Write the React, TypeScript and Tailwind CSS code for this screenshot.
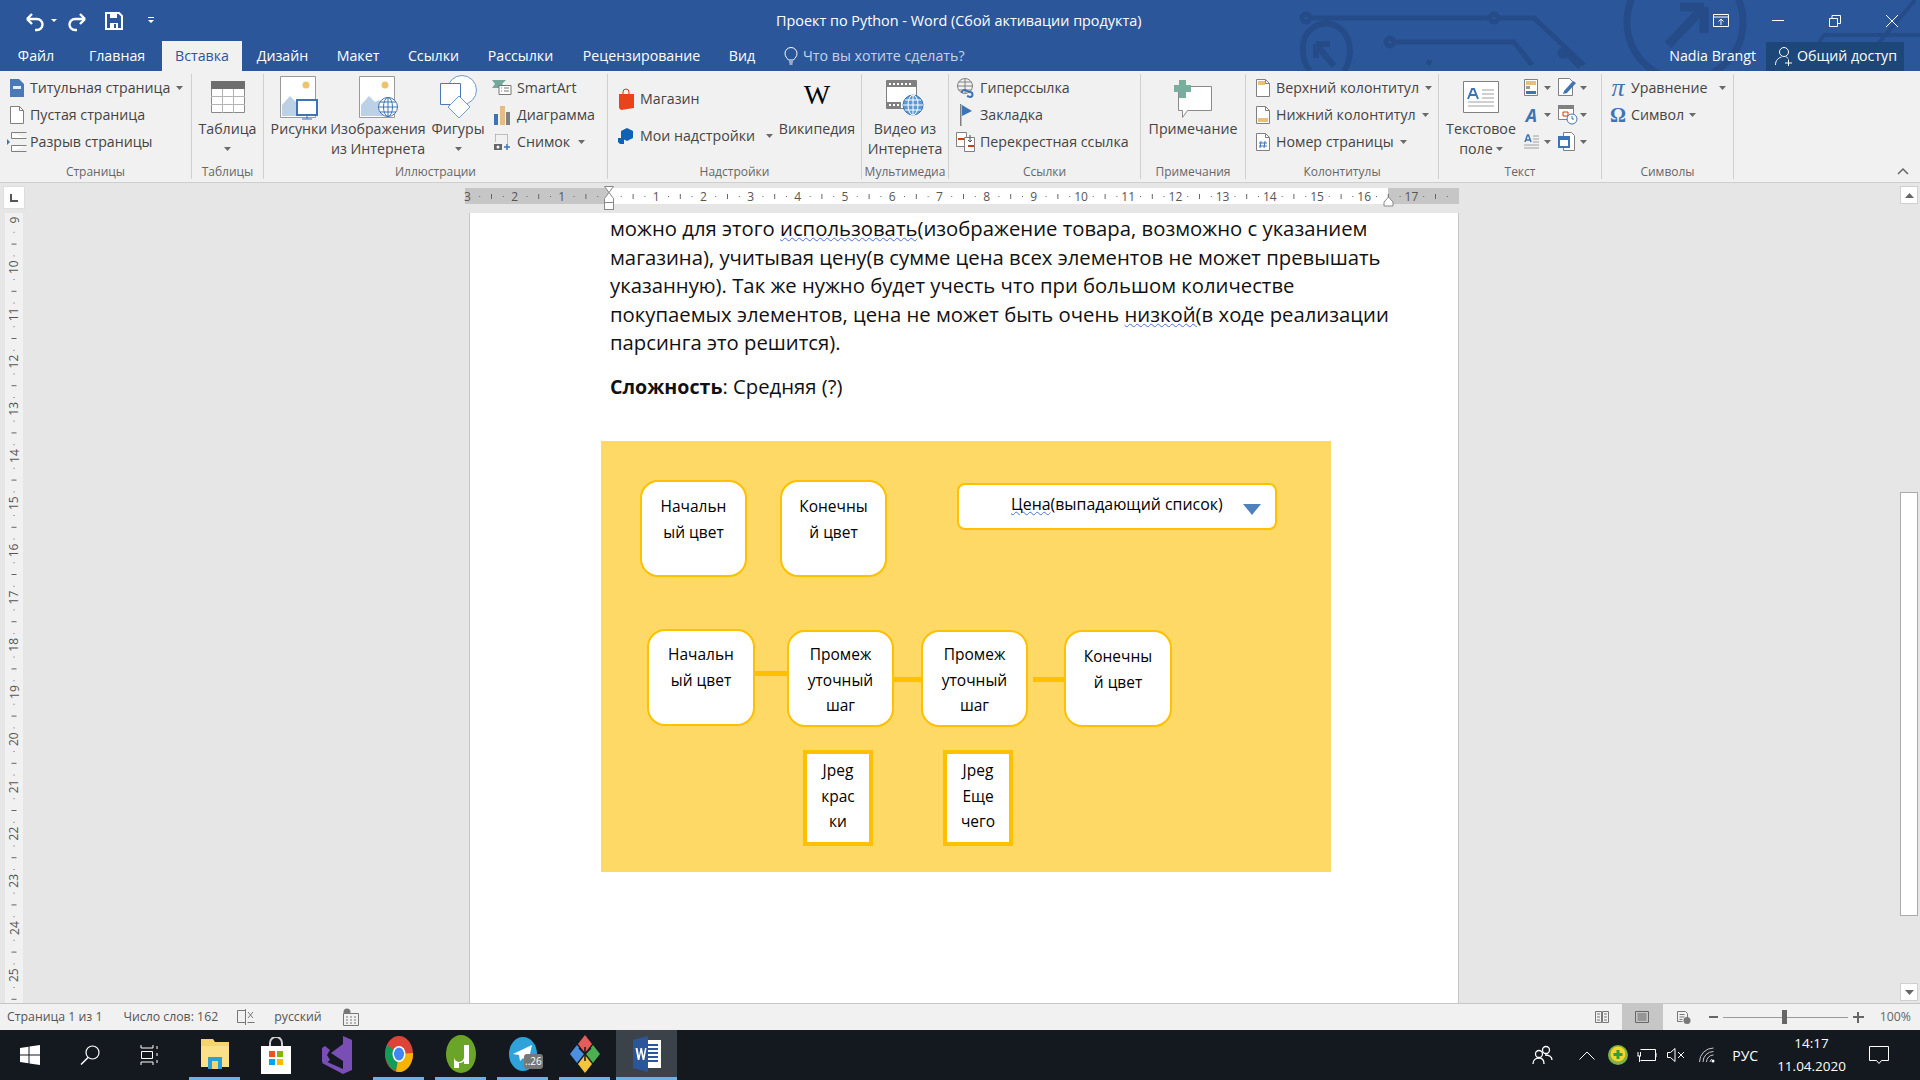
import React from "react";

const font = { fontFamily: '"Open Sans", "Liberation Sans", sans-serif' };

const Caret = ({ className = "" }: { className?: string }) => (
  <svg width="7" height="4" viewBox="0 0 7 4" className={`shrink-0 ${className}`}>
    <path d="M0 0h7L3.500 4z" fill="#6a6a6a" />
  </svg>
);

const Ico = ({ w = 16, h = 18, children, className = "" }: { w?: number; h?: number; children: React.ReactNode; className?: string }) => (
  <svg width={w} height={h} viewBox={`0 0 ${w} ${h}`} fill="none" className={`shrink-0 ${className}`}>
    {children}
  </svg>
);

const DocPage = ({ children }: { children?: React.ReactNode }) => (
  <Ico w={14} h={18}>
    <path d="M.5.5h9l4 4v13H.5z" fill="#fff" stroke="#808080" />
    <path d="M9.5.5v4h4" stroke="#808080" />
    {children}
  </Ico>
);

const SmallRow = ({ icon, label, caret, gap = "gap-[5px]", caretGap = "ml-[3px]" }: { icon: React.ReactNode; label: string; caret?: boolean; gap?: string; caretGap?: string }) => (
  <div className={`flex h-[27px] items-center whitespace-nowrap ${gap}`}>
    <div className="flex w-[20px] shrink-0 justify-center">{icon}</div>
    <span>{label}</span>
    {caret && <Caret className={caretGap} />}
  </div>
);

const LargeBtn = ({ icon, lines, caret, width }: { icon: React.ReactNode; lines: string[]; caret?: boolean; width: string }) => (
  <div className={`flex shrink-0 flex-col items-center ${width}`}>
    <div className="flex h-[45px] items-center justify-center">{icon}</div>
    {lines.map((l, i) => (
      <div key={i} className="flex h-[20px] items-center gap-[3px] whitespace-nowrap">
        {l}
        {caret && i === lines.length - 1 && lines.length > 1 && <Caret />}
      </div>
    ))}
    {caret && lines.length === 1 && (
      <div className="flex h-[20px] items-center">
        <Caret />
      </div>
    )}
  </div>
);

const Group = ({ width, label, children, className = "" }: { width: string; label: string; children: React.ReactNode; className?: string }) => (
  <div className={`flex h-[105px] shrink-0 flex-col border-r border-[#d0d0d0] ${width}`}>
    <div className={`flex h-[91px] ${className}`}>{children}</div>
    <div className="flex h-[14px] items-center justify-center text-[12px] text-[#666666]">{label}</div>
  </div>
);

const PictureIcon = ({ overlay }: { overlay: React.ReactNode }) => (
  <Ico w={42} h={46}>
    <path d="M2.5 2.5h35v41h-35z" fill="#fff" stroke="#9a9a9a" />
    <circle cx="28" cy="11" r="3.500" fill="#eec36f" />
    <path d="M4 42V31l8-9 6 6 4-2 8 8v8z" fill="#bcd0e6" />
    {overlay}
  </Ico>
);

const Tab = ({ label, active, width }: { label: string; active?: boolean; width: string }) => (
  <div className={`flex h-[30px] shrink-0 items-center justify-center ${width} ${active ? "bg-[#f1f1f1] text-[#2b579a]" : "text-white"}`}>
    {label}
  </div>
);

const Node = ({ lines, className }: { lines: string[]; className: string }) => (
  <div className={`absolute flex flex-col items-center rounded-[18px] border-[2px] border-[#ffc000] bg-white text-[15.5px] leading-[25.5px] text-black ${className}`}>
    {lines.map((l) => (
      <span key={l}>{l}</span>
    ))}
  </div>
);

const Jpeg = ({ lines, className }: { lines: string[]; className: string }) => (
  <div className={`absolute flex h-[96px] w-[70px] flex-col items-center border-[4px] border-[#ffc000] bg-white pt-[4px] text-[15.5px] leading-[25.5px] text-black ${className}`}>
    {lines.map((l) => (
      <span key={l}>{l}</span>
    ))}
  </div>
);

const HRuler = () => {
  const cm = 47.2;
  const x0 = 144;
  const marks = [] as React.ReactNode[];
  for (let i = -3; i <= 18; i++) {
    const x = x0 + i * cm;
    if (i !== 0 && i <= 17) {
      marks.push(
        <text key={`n${i}`} x={x} y="18" textAnchor="middle" fontSize="12" fill="#555555" style={font}>
          {Math.abs(i)}
        </text>
      );
    }
    [0.25, 0.75].forEach((f) => {
      const dx = x + f * cm;
      if (dx < 994) marks.push(<rect key={`d${i}${f}`} x={dx} y="13" width="1" height="1" fill="#666666" />);
    });
    const mx = x + 0.5 * cm;
    if (mx < 994) marks.push(<rect key={`m${i}`} x={mx} y="11" width="1" height="5" fill="#666666" />);
  }
  return (
    <svg width="1000" height="30" viewBox="0 0 1000 30" className="block overflow-visible">
      <rect x="0" y="5" width="994" height="16" fill="#c6c6c6" />
      <rect x="144" y="5" width="779" height="16" fill="#ffffff" />
      {marks}
      <path d="M139.5 3.5h9l-4.5 6zM144 9.5l4.5 6v4h-9v-4z" fill="#fff" stroke="#888888" />
      <rect x="139.5" y="19.5" width="9" height="7" fill="#fff" stroke="#888888" />
      <path d="M923.5 14l4.5 5v4h-9v-4z" fill="#fff" stroke="#888888" />
    </svg>
  );
};

const VRuler = () => {
  const nums = Array.from({ length: 17 }, (_, i) => i + 9);
  return (
    <svg width="18" height="790" viewBox="0 0 18 790" className="block">
      <rect width="18" height="790" fill="#f1f1f1" />
      {nums.map((n) => {
        const y = 7 + (n - 9) * 47.2;
        return (
          <g key={n}>
            <text x="9" y={y} textAnchor="middle" fontSize="12" fill="#555555" transform={`rotate(-90 9 ${y})`} dominantBaseline="central" style={font}>
              {n}
            </text>
            <rect x="8.500" y={y + 11.8} width="1" height="1" fill="#666666" />
            <rect x="6.500" y={y + 23.6} width="5" height="1" fill="#666666" />
            <rect x="8.500" y={y + 35.4} width="1" height="1" fill="#666666" />
          </g>
        );
      })}
    </svg>
  );
};

export default function App() {
  return (
    <div className="flex h-[1080px] w-[1920px] flex-col overflow-hidden bg-[#e6e6e6] text-[14.2px] text-[#444444]" style={font}>
      {/* заголовок */}
      <div className="relative h-[71px] shrink-0 bg-[#2b579a] text-white">
        <svg width="640" height="71" viewBox="0 0 640 71" className="absolute right-0 top-0">
          <g stroke="#254c88" strokeWidth="5" fill="none">
            <circle cx="26" cy="18" r="4" />
            <path d="M30 18h180m8 0h36l50 47" />
            <circle cx="214" cy="18" r="4" />
            <circle cx="110" cy="42" r="4" />
            <path d="M114 42h120l18 23" />
            <circle cx="283" cy="53" r="3" />
            <path d="M286 53l14 14" />
            <path d="M148 65 L150 60" />
            <path d="M30 71a24 30 0 0 1 -5 -34a24 26 0 0 1 42 0a24 30 0 0 1 -3 34" strokeWidth="6" />
            <path d="M36 44l18 22M36 44h14M36 44v14" strokeWidth="6" />
            <circle cx="405" cy="22" r="58" strokeWidth="7" />
            <path d="M388 45l36 -38M424 7h-24M424 7v26" strokeWidth="9" />
            <path d="M520 71l24 -36h96M575 71l60 -71" strokeWidth="4" />
          </g>
        </svg>
        <div className="relative flex h-[41px] items-center">
          <div className="flex w-[160px] shrink-0 items-center pl-[24px]">
            <Ico w={22} h={22}>
              <path d="M3 9l5-5M3 9l5 5M3 9h10a5 5 0 0 1 0 11h-2" stroke="#fff" strokeWidth="2.400" />
            </Ico>
            <svg width="6" height="4" viewBox="0 0 6 4" className="ml-[5px]">
              <path d="M0 0h6L3 3z" fill="#fff" />
            </svg>
            <Ico w={22} h={22} className="ml-[9px]">
              <path d="M19 9l-5-5M19 9l-5 5M19 9H9a5 5 0 0 0 0 11h2" stroke="#fff" strokeWidth="2.400" />
            </Ico>
            <Ico w={18} h={18} className="ml-[17px]">
              <path d="M1 1h13l3 3v13H1z" stroke="#fff" strokeWidth="2" />
              <path d="M5 1h7v5H5z" fill="#fff" />
              <path d="M5 11h8v6H5z" fill="#fff" />
              <path d="M9 12h2v4H9z" fill="#2b579a" />
            </Ico>
            <svg width="6" height="7" viewBox="0 0 6 7" className="ml-[25px]">
              <path d="M0 0h6v1H0zM0 3h6L3 6z" fill="#fff" />
            </svg>
          </div>
          <div className="absolute left-[776px] whitespace-nowrap text-[14.4px] text-white">Проект по Python - Word (Сбой активации продукта)</div>
          <div className="ml-auto flex items-center">
            <div className="flex w-[57px] justify-center">
              <Ico w={16} h={13}>
                <path d="M.5.5h15v12H.5z" stroke="#fff" />
                <path d="M1 3h14" stroke="#fff" />
                <path d="M8 11V5M5.500 7.500L8 5l2.500 2.500" stroke="#fff" />
              </Ico>
            </div>
            <div className="flex w-[57px] justify-center">
              <div className="h-px w-[12px] bg-white" />
            </div>
            <div className="flex w-[57px] justify-center">
              <Ico w={12} h={12}>
                <path d="M.5 3.500h8v8h-8z" stroke="#fff" />
                <path d="M3 3V.5h8.500v8H9" stroke="#fff" />
              </Ico>
            </div>
            <div className="flex w-[57px] justify-center">
              <Ico w={14} h={14}>
                <path d="M1 1l12 12M13 1L1 13" stroke="#fff" />
              </Ico>
            </div>
          </div>
        </div>
        <div className="relative flex h-[30px] items-center text-[14.2px]">
          <div className="flex">
            <Tab label="Файл" width="w-[72px]" />
            <Tab label="Главная" width="w-[90px]" />
            <Tab label="Вставка" active width="w-[80px]" />
            <Tab label="Дизайн" width="w-[81px]" />
            <Tab label="Макет" width="w-[70px]" />
            <Tab label="Ссылки" width="w-[81px]" />
            <Tab label="Рассылки" width="w-[93px]" />
            <Tab label="Рецензирование" width="w-[149px]" />
            <Tab label="Вид" width="w-[52px]" />
          </div>
          <div className="ml-[16px] flex items-center gap-[5px] text-[#c5d3e8]">
            <Ico w={14} h={18}>
              <path d="M4.500 13C3 11 1 9.500 1 6.500a6 6 0 0 1 12 0C13 9.500 11 11 9.500 13z" stroke="#fff" />
              <path d="M5 15h4M5.500 17h3" stroke="#fff" />
            </Ico>
            <span>Что вы хотите сделать?</span>
          </div>
          <div className="ml-auto flex items-center">
            <span className="mr-[10px] text-white">Nadia Brangt</span>
            <div className="mr-[16px] flex h-[29px] w-[138px] items-center gap-[3px] bg-[#1d4679] pl-[8px] text-white">
              <Ico w={20} h={20}>
                <circle cx="10" cy="6" r="4.500" stroke="#fff" />
                <path d="M1.500 19c0-5 3-7 6-8M12 10.500l2 2M11 17h7M14.500 13.500v7" stroke="#fff" />
              </Ico>
              <span>Общий доступ</span>
            </div>
          </div>
        </div>
      </div>

      {/* лента */}
      <div className="flex h-[112px] shrink-0 border-b border-[#cfcfcf] bg-[#f1f1f1] pt-[3px]">
        <Group width="w-[192px]" label="Страницы" className="pl-[7px]">
          <div className="flex flex-col">
            <SmallRow
              label="Титульная страница"
              caret
              gap="gap-[3px]"
              icon={
                <Ico w={14} h={18}>
                  <path d="M0 0h9l5 5v13H0z" fill="#4a7ab5" />
                  <path d="M3 7h8v3H3z" fill="#e6edf6" />
                </Ico>
              }
            />
            <SmallRow label="Пустая страница" gap="gap-[3px]" icon={<DocPage />} />
            <SmallRow
              label="Разрыв страницы"
              gap="gap-[3px]"
              icon={
                <Ico w={20} h={20}>
                  <path d="M4.500 .5v6h15M4.500 19.500v-6h15M4.500 .5h15M4.500 19.500h15" stroke="#808080" fill="#fff" />
                  <path d="M0 7l3 3-3 3z" fill="#3d74b5" />
                </Ico>
              }
            />
          </div>
        </Group>

        <Group width="w-[72px]" label="Таблицы" className="justify-center">
          <LargeBtn
            width="w-[70px]"
            caret
            lines={["Таблица"]}
            icon={
              <Ico w={34} h={32}>
                <path d="M.5.5h33v31H.5z" fill="#fff" stroke="#8a8a8a" />
                <path d="M0 0h34v8H0z" fill="#6e6e6e" />
                <path d="M11.500 8v24M22.500 8v24M0 15.500h34M0 23.500h34" stroke="#b4b4b4" />
              </Ico>
            }
          />
        </Group>

        <Group width="w-[344px]" label="Иллюстрации" className="pl-[7px]">
          <LargeBtn
            width="w-[56px]"
            lines={["Рисунки"]}
            icon={
              <PictureIcon
                overlay={
                  <>
                    <path d="M19 26h20v15H19z" fill="#fff" stroke="#3d74b5" strokeWidth="2" />
                    <path d="M29 41v4M24 45h10" stroke="#3d74b5" />
                  </>
                }
              />
            }
          />
          <LargeBtn
            width="w-[102px]"
            lines={["Изображения", "из Интернета"]}
            icon={
              <PictureIcon
                overlay={
                  <>
                    <circle cx="31" cy="33" r="9.500" fill="#fff" stroke="#3d74b5" />
                    <path d="M21.500 33h19M23 28h16M23 38h16M31 23.500v19" stroke="#3d74b5" />
                    <ellipse cx="31" cy="33" rx="4.500" ry="9.500" stroke="#3d74b5" />
                  </>
                }
              />
            }
          />
          <LargeBtn
            width="w-[58px]"
            caret
            lines={["Фигуры"]}
            icon={
              <Ico w={38} h={46}>
                <circle cx="23" cy="16" r="14.500" fill="#fff" stroke="#6d9bd0" />
                <path d="M1.500 9.500h20v21h-20z" fill="#fff" stroke="#4a7ab5" />
                <path d="M20 22l11 11-11 11L9 33z" fill="#fff" stroke="#6d9bd0" />
              </Ico>
            }
          />
          <div className="ml-[5px] flex flex-col">
            <SmallRow
              label="SmartArt"
              gap="gap-[5px]"
              icon={
                <Ico w={20} h={16}>
                  <path d="M0 0h14l-4 4 4 4H0l3-4z" fill="#74a89c" />
                  <path d="M7 5.500h12v9H7z" fill="#fff" stroke="#777777" />
                  <path d="M9 8h1M12 8h5M9 11h1M12 11h5" stroke="#777777" />
                </Ico>
              }
            />
            <SmallRow
              label="Диаграмма"
              gap="gap-[5px]"
              icon={
                <Ico w={18} h={20}>
                  <path d="M1 9h4v11H1z" fill="#3d74b5" />
                  <path d="M7 1h5v19H7z" fill="#e3bd85" />
                  <path d="M13 7h4v13h-4z" fill="#808080" />
                </Ico>
              }
            />
            <SmallRow
              label="Снимок"
              caret
              gap="gap-[5px]"
              icon={
                <Ico w={18} h={18}>
                  <path d="M2.500 1.500h12v9" stroke="#888888" strokeDasharray="1 1" />
                  <path d="M2.500 1.500v8" stroke="#888888" strokeDasharray="1 1" />
                  <path d="M1 11h8v6H1z" fill="#666666" />
                  <circle cx="5" cy="14" r="1.500" fill="#fff" />
                  <path d="M11 14h6M14 11v6" stroke="#3d74b5" strokeWidth="1.500" />
                </Ico>
              }
            />
          </div>
        </Group>

        <Group width="w-[254px]" label="Надстройки" className="pl-[10px]">
          <div className="flex w-[163px] flex-col pt-[3px]">
            <div className="flex h-[44px] items-center gap-[6px] whitespace-nowrap">
              <Ico w={16} h={22}>
                <path d="M5 7V4a3 3 0 0 1 6 0v3" stroke="#d83b01" />
                <path d="M1 6h15v14l-13 2-2-2z" fill="#e8431a" />
              </Ico>
              <span>Магазин</span>
            </div>
            <div className="flex h-[30px] items-center gap-[6px] whitespace-nowrap">
              <Ico w={16} h={18}>
                <path d="M9 1l6 3v7l-6 3-6-3V4z" fill="#0f62b5" />
                <path d="M0 11h6v6H2l-2-2z" fill="#0f62b5" />
              </Ico>
              <span>Мои надстройки</span>
              <Caret className="ml-[5px]" />
            </div>
          </div>
          <LargeBtn
            width="w-[72px]"
            lines={["Википедия"]}
            icon={
              <span className="-mt-[4px] text-[28px] leading-none text-black" style={{ fontFamily: '"Liberation Serif", serif' }}>
                W
              </span>
            }
          />
        </Group>

        <Group width="w-[87px]" label="Мультимедиа" className="justify-center">
          <LargeBtn
            width="w-[80px]"
            lines={["Видео из", "Интернета"]}
            icon={
              <Ico w={38} h={38}>
                <path d="M.5 2.500h30v28H.5z" fill="#fff" stroke="#808080" />
                <path d="M1 3h30v6H1zM1 24h14v6H1z" fill="#808080" />
                <path d="M3 5h2v2H3zM7 5h2v2H7zM11 5h2v2h-2zM15 5h2v2h-2zM19 5h2v2h-2zM23 5h2v2h-2zM3 26h2v2H3zM7 26h2v2H7zM11 26h2v2h-2z" fill="#fff" />
                <circle cx="27" cy="27" r="10" fill="#5a9bd5" stroke="#3d74b5" />
                <path d="M17 27h20M19 22h16M19 32h16M27 17v20" stroke="#fff" />
                <ellipse cx="27" cy="27" rx="5" ry="10" stroke="#fff" />
              </Ico>
            }
          />
        </Group>

        <Group width="w-[192px]" label="Ссылки" className="pl-[7px]">
          <div className="flex flex-col">
            <SmallRow
              label="Гиперссылка"
              gap="gap-[4px]"
              icon={
                <Ico w={18} h={20}>
                  <circle cx="8" cy="8" r="7.500" stroke="#808080" />
                  <path d="M.5 8h15M2 4h12M2 12h12M8 .5v15" stroke="#808080" />
                  <path d="M5 15a2.500 2.500 0 0 1 3-3l2 1 3 1a2.500 2.500 0 0 1 0 5l-3-1" stroke="#3d74b5" strokeWidth="2" />
                </Ico>
              }
            />
            <SmallRow
              label="Закладка"
              gap="gap-[4px]"
              icon={
                <Ico w={14} h={22}>
                  <path d="M1 0h1.500v22H1z" fill="#808080" />
                  <path d="M3 1l10 6-10 5z" fill="#3d74b5" />
                </Ico>
              }
            />
            <SmallRow
              label="Перекрестная ссылка"
              gap="gap-[4px]"
              icon={
                <Ico w={20} h={20}>
                  <path d="M.5.5h10v14H.5z" fill="#fff" stroke="#808080" />
                  <path d="M8.500 5.500h10v14h-10z" fill="#fff" stroke="#808080" />
                  <path d="M2 7h6" stroke="#d83b01" strokeWidth="2" />
                  <path d="M12 14h6" stroke="#d83b01" strokeWidth="2" />
                  <path d="M14 3v7M12 8l2 2 2-2" stroke="#555555" />
                </Ico>
              }
            />
          </div>
        </Group>

        <Group width="w-[105px]" label="Примечания" className="justify-center">
          <LargeBtn
            width="w-[100px]"
            lines={["Примечание"]}
            icon={
              <Ico w={38} h={38} className="mt-[4px]">
                <path d="M4.500 6.500h33v24h-24l-5 7v-7h-4z" fill="#fff" stroke="#8a8a8a" />
                <path d="M5 0h7v5h5v7h-5v6H5v-6H0V5h5z" fill="#78ae9e" />
              </Ico>
            }
          />
        </Group>

        <Group width="w-[193px]" label="Колонтитулы" className="pl-[7px]">
          <div className="flex flex-col">
            <SmallRow
              label="Верхний колонтитул"
              caret
              gap="gap-[3px]"
              icon={
                <DocPage>
                  <path d="M2 2h7v4H2z" fill="#e9c078" />
                </DocPage>
              }
            />
            <SmallRow
              label="Нижний колонтитул"
              caret
              gap="gap-[3px]"
              icon={
                <DocPage>
                  <path d="M2 12h10v4H2z" fill="#e9c078" />
                </DocPage>
              }
            />
            <SmallRow
              label="Номер страницы"
              caret
              gap="gap-[3px]"
              icon={
                <DocPage>
                  <path d="M5 8l-1 7M9 8l-1 7M3 10h8M3 13h8" stroke="#3d74b5" />
                </DocPage>
              }
            />
          </div>
        </Group>

        <Group width="w-[163px]" label="Текст" className="pl-[4px]">
          <LargeBtn
            width="w-[76px]"
            caret
            lines={["Текстовое", "поле"]}
            icon={
              <Ico w={36} h={32}>
                <path d="M.5.5h35v31H.5z" fill="#fff" stroke="#808080" />
                <path d="M19 9h12M19 13h12M19 17h12M5 21h26M5 25h26" stroke="#a0a0a0" />
                <path d="M5 18l4-10h2l4 10M7 14h6" stroke="#3d74b5" strokeWidth="2" />
              </Ico>
            }
          />
          <div className="ml-[5px] flex flex-col">
            <div className="flex h-[27px] items-center">
              <Ico w={15} h={18}>
                <path d="M.5.500h13v16H.5z" fill="#fff" stroke="#808080" />
                <path d="M2 2h10v4H2z" fill="#e9c078" />
                <path d="M2 7h4v3H2z" fill="#9a9a9a" />
                <path d="M2 12h10v3H2z" fill="#3d74b5" />
              </Ico>
              <Caret className="ml-[5px]" />
              <Ico w={20} h={20} className="ml-[7px]">
                <path d="M.5.500h11l3 3v14H.5z" fill="#fff" stroke="#808080" />
                <path d="M6 13l9-10 3 2-9 10-4 1z" fill="#3d74b5" />
              </Ico>
              <Caret className="ml-[2px]" />
            </div>
            <div className="flex h-[27px] items-center">
              <div className="w-[15px] text-center text-[18px] font-bold italic leading-none text-[#3d74b5]">A</div>
              <Caret className="ml-[5px]" />
              <Ico w={20} h={20} className="ml-[7px]">
                <path d="M.5.500h15v14H.5z" fill="#fff" stroke="#808080" />
                <path d="M0 0h16v4H0z" fill="#808080" />
                <path d="M5 7h5v4H5z" stroke="#d83b01" />
                <circle cx="14" cy="14" r="5" fill="#fff" stroke="#3d74b5" />
                <path d="M14 11v3h2" stroke="#3d74b5" />
              </Ico>
              <Caret className="ml-[2px]" />
            </div>
            <div className="flex h-[27px] items-center">
              <Ico w={15} h={18}>
                <path d="M9 3h6M9 6h6M9 9h6M0 12h15M0 15h15" stroke="#a0a0a0" />
                <path d="M1 9l2.500-7h1L7 9M2 7h4" stroke="#3d74b5" strokeWidth="1.500" />
              </Ico>
              <Caret className="ml-[5px]" />
              <Ico w={20} h={20} className="ml-[7px]">
                <path d="M5.500.5h8l3 3v15h-11z" fill="#fff" stroke="#808080" />
                <path d="M1 5h10v10H1z" fill="#fff" stroke="#3d74b5" strokeWidth="2" />
                <path d="M1 5h10v3H1z" fill="#3d74b5" />
              </Ico>
              <Caret className="ml-[2px]" />
            </div>
          </div>
        </Group>

        <Group width="w-[132px]" label="Символы" className="pl-[8px]">
          <div className="flex flex-col">
            <div className="flex h-[27px] items-center gap-[5px] whitespace-nowrap">
              <span className="w-[16px] text-center text-[26px] leading-none text-[#3d74b5]" style={{ fontFamily: '"Liberation Serif", serif', fontStyle: "italic" }}>
                π
              </span>
              <span>Уравнение</span>
              <Caret className="ml-[7px]" />
            </div>
            <div className="flex h-[27px] items-center gap-[5px] whitespace-nowrap">
              <span className="w-[16px] text-center text-[20px] font-bold leading-none text-[#3d74b5]" style={{ fontFamily: '"Liberation Serif", serif' }}>
                Ω
              </span>
              <span>Символ</span>
              <Caret />
            </div>
          </div>
        </Group>

        <div className="flex flex-1 items-end justify-end pb-[7px] pr-[11px]">
          <Ico w={12} h={8}>
            <path d="M1 7l5-5 5 5" stroke="#666666" strokeWidth="1.500" />
          </Ico>
        </div>
      </div>

      {/* линейка и документ */}
      <div className="flex h-[30px] shrink-0">
        <div className="ml-[3px] mt-[3px] flex h-[23px] w-[22px] items-center justify-center border border-[#dedede] bg-white">
          <Ico w={8} h={8}>
            <path d="M1 0v7h7" stroke="#555555" strokeWidth="2" />
          </Ico>
        </div>
        <div className="ml-[440px]">
          <HRuler />
        </div>
      </div>

      <div className="flex min-h-0 flex-1">
        <div className="ml-[5px] w-[18px] shrink-0">
          <VRuler />
        </div>
        <div className="ml-[446px] h-full w-[990px] shrink-0 border-x border-[#c6c6c6] bg-white pl-[140px] pt-[1px] text-[20.3px] leading-[28.5px] text-[#111111]">
          <p className="whitespace-nowrap">
            можно для этого <span className="underline decoration-[#4a6fd0] decoration-wavy decoration-1">использовать</span>(изображение товара, возможно с указанием
          </p>
          <p className="whitespace-nowrap">магазина), учитывая цену(в сумме цена всех элементов не может превышать</p>
          <p className="whitespace-nowrap">указанную). Так же нужно будет учесть что при большом количестве</p>
          <p className="whitespace-nowrap">
            покупаемых элементов, цена не может быть очень <span className="underline decoration-[#4a6fd0] decoration-wavy decoration-1">низкой(</span>в ходе реализации
          </p>
          <p className="whitespace-nowrap">парсинга это решится).</p>
          <p className="mt-[15px] whitespace-nowrap">
            <b className="text-[19.6px]">Сложность</b>: Средняя (?)
          </p>
          {/* схема */}
          <div className="relative -ml-[9px] mt-[40px] h-[431px] w-[730px] bg-[#ffd966]">
            <Node lines={["Начальн", "ый цвет"]} className="left-[39px] top-[39px] h-[97px] w-[107px] pt-[12px]" />
            <Node lines={["Конечны", "й цвет"]} className="left-[179px] top-[39px] h-[97px] w-[107px] pt-[12px]" />
            <div className="absolute left-[356px] top-[42px] flex h-[47px] w-[320px] items-center rounded-[8px] border-[2px] border-[#ffc000] bg-white pb-[5px] pl-[52px] text-[15.9px] text-black">
              <span className="underline decoration-[#4a6fd0] decoration-wavy decoration-1">Цена</span>(выпадающий список)
              <svg width="18" height="11" viewBox="0 0 18 11" className="ml-[20px] mt-[10px]">
                <path d="M0 0h18L9 11z" fill="#4f81bd" />
              </svg>
            </div>
            <Node lines={["Начальн", "ый цвет"]} className="left-[46px] top-[188px] h-[97px] w-[108px] pt-[11px]" />
            <div className="absolute left-[154px] top-[230px] h-[5px] w-[32px] bg-[#ffc000]" />
            <Node lines={["Промеж", "уточный", "шаг"]} className="left-[186px] top-[189px] h-[97px] w-[107px] pt-[10px]" />
            <div className="absolute left-[293px] top-[236px] h-[5px] w-[33px] bg-[#ffc000]" />
            <Node lines={["Промеж", "уточный", "шаг"]} className="left-[320px] top-[189px] h-[97px] w-[107px] pt-[10px]" />
            <div className="absolute left-[432px] top-[236px] h-[5px] w-[31px] bg-[#ffc000]" />
            <Node lines={["Конечны", "й цвет"]} className="left-[463px] top-[189px] h-[97px] w-[108px] pt-[12px]" />
            <Jpeg lines={["Jpeg", "крас", "ки"]} className="left-[202px] top-[309px]" />
            <Jpeg lines={["Jpeg", "Еще", "чего"]} className="left-[342px] top-[309px]" />
          </div>
        </div>
        {/* полоса прокрутки */}
        <div className="ml-[441px] flex w-[18px] shrink-0 flex-col">
          <div className="mt-[-27px] flex h-[18px] w-[18px] items-center justify-center border border-[#d0d0d0] bg-white">
            <svg width="9" height="5" viewBox="0 0 9 5">
              <path d="M0 5h9L4.500 0z" fill="#666666" />
            </svg>
          </div>
          <div className="mt-[288px] h-[424px] w-[18px] border border-[#ababab] bg-white" />
          <div className="mt-[67px] flex h-[18px] w-[18px] items-center justify-center border border-[#d0d0d0] bg-white">
            <svg width="9" height="5" viewBox="0 0 9 5">
              <path d="M0 0h9L4.500 5z" fill="#666666" />
            </svg>
          </div>
        </div>
      </div>

      {/* строка состояния */}
      <div className="flex h-[27px] shrink-0 items-center border-t border-[#c6c6c6] bg-[#f1f1f1] text-[12.3px] text-[#555555]">
        <span className="ml-[7px] whitespace-nowrap">Страница 1 из 1</span>
        <span className="ml-[21px] whitespace-nowrap">Число слов: 162</span>
        <Ico w={18} h={16} className="ml-[19px]">
          <path d="M8.500 1.500h-8v12h8M8.500 0v16" stroke="#777777" />
          <path d="M11 3l5 6M16 3l-5 6M10.500 13.500h7" stroke="#777777" />
        </Ico>
        <span className="ml-[19px] whitespace-nowrap">русский</span>
        <Ico w={17} h={18} className="ml-[20px]">
          <circle cx="5" cy="4" r="3.500" fill="#777777" />
          <path d="M1.500 5.500h15v12h-15z" stroke="#777777" fill="#f1f1f1" />
          <path d="M4 9h2M8 9h2M12 9h2M4 12h2M8 12h2M12 12h2M4 15h2M8 15h2M12 15h2" stroke="#777777" />
        </Ico>
        <div className="ml-auto flex h-full items-center">
          <Ico w={14} h={14}>
            <path d="M.5 1.500h6v11h-6zM7.500 1.500h6v11h-6zM2 4h3M2 7h3M2 10h3M9 4h3M9 7h3M9 10h3" stroke="#777777" />
          </Ico>
          <div className="ml-[13px] flex h-full w-[41px] items-center justify-center bg-[#c6c6c6]">
            <Ico w={14} h={12}>
              <path d="M.5.500h13v11H.5zM2.500 3h9M2.500 5h9M2.500 7h9M2.500 9h9" stroke="#666666" />
            </Ico>
          </div>
          <Ico w={14} h={13} className="ml-[14px]">
            <path d="M.5.500h8l2 2v5M.5.500v10h5M2.500 3.500h5M2.500 6h5M2.500 8.500h3" stroke="#777777" />
            <circle cx="10" cy="9.500" r="3.500" fill="#777777" />
          </Ico>
          <div className="ml-[18px] h-[2px] w-[9px] bg-[#666666]" />
          <div className="relative ml-[5px] h-px w-[125px] bg-[#9a9a9a]">
            <div className="absolute left-[59px] top-[-7px] h-[14px] w-[5px] bg-[#666666]" />
          </div>
          <div className="relative ml-[5px] h-[11px] w-[11px]">
            <div className="absolute left-0 top-[4.500px] h-[2px] w-[11px] bg-[#666666]" />
            <div className="absolute left-[4.500px] top-0 h-[11px] w-[2px] bg-[#666666]" />
          </div>
          <span className="ml-[16px] mr-[9px] whitespace-nowrap text-[#666666]">100%</span>
        </div>
      </div>

      {/* панель задач */}
      <div className="flex h-[50px] shrink-0 items-stretch bg-[#141920] text-white">
        <div className="flex w-[60px] items-center justify-center">
          <svg width="20" height="20" viewBox="0 0 20 20">
            <path d="M0 3l8.500-1.200V9.500H0zM9.500 1.600L20 0v9.500H9.500zM0 10.500h8.500v7.700L0 17zM9.500 10.500H20V20l-10.500-1.500z" fill="#fff" />
          </svg>
        </div>
        <div className="flex w-[59px] items-center justify-center">
          <Ico w={20} h={20}>
            <circle cx="12.500" cy="7.500" r="6.500" stroke="#fff" strokeWidth="1.200" />
            <path d="M8 12.500L1 19.500" stroke="#fff" strokeWidth="1.500" />
          </Ico>
        </div>
        <div className="flex w-[62px] items-center justify-center">
          <Ico w={20} h={20}>
            <path d="M1 0v3h12V0M1 20v-3h12v3M1.500 6.500h11v7h-11zM17 1v3M17 8v3M17 15v3" stroke="#fff" />
          </Ico>
        </div>
        <div className="ml-[8px] flex w-[51px] items-center justify-center border-b-[3px] border-[#6fb0e0]">
          <Ico w={28} h={30}>
            <path d="M0 0h12l2 3h14v25H0z" fill="#f6d36b" />
            <path d="M0 7h28v21H0z" fill="#fbe08a" />
            <path d="M7 18h14v12H7z" fill="#2aa0d8" />
            <path d="M11 22h6v8h-6z" fill="#f6d36b" />
          </Ico>
        </div>
        <div className="ml-[10px] flex w-[51px] items-center justify-center">
          <Ico w={30} h={37}>
            <path d="M9 9V6a6 6 0 0 1 12 0v3" stroke="#cfcfcf" strokeWidth="2" />
            <path d="M0 9h30v28H0z" fill="#fff" />
            <path d="M8 14h6v6H8z" fill="#f25022" />
            <path d="M16 14h6v6h-6z" fill="#7fba00" />
            <path d="M8 22h6v6H8z" fill="#00a4ef" />
            <path d="M16 22h6v6h-6z" fill="#ffb900" />
          </Ico>
        </div>
        <div className="ml-[10px] flex w-[52px] items-center justify-center">
          <Ico w={30} h={38}>
            <path d="M21 0l9 4v30l-9 4L0 27l3-2 18 8zM21 8v17L9 17z" fill="#7a4fb5" />
            <path d="M0 12l3-2 5 4-3 5 3 5-5 4-3-2z" fill="#7a4fb5" />
          </Ico>
        </div>
        <div className="ml-[10px] flex w-[51px] items-center justify-center border-b-[3px] border-[#6fb0e0]">
          <svg width="28" height="36" viewBox="0 0 28 36">
            <ellipse cx="14" cy="18" rx="14" ry="18" fill="#db4437" />
            <path d="M14 18L2 9a14 18 0 0 0 9 26z" fill="#0f9d58" />
            <path d="M14 18l-3 17.500A14 18 0 0 0 28 17z" fill="#f4b400" />
            <ellipse cx="14" cy="18" rx="6.500" ry="8" fill="#fff" />
            <ellipse cx="14" cy="18" rx="5" ry="6.500" fill="#4285f4" />
          </svg>
        </div>
        <div className="ml-[11px] flex w-[51px] items-center justify-center border-b-[3px] border-[#6fb0e0]">
          <svg width="30" height="38" viewBox="0 0 30 38">
            <ellipse cx="15" cy="19" rx="15" ry="19" fill="#6aa52a" />
            <path d="M8 10v12a5 5 0 0 0 10 0V10h5v19h-5v-3a5 5 0 0 1-5 2v5H8z" fill="#fff" />
          </svg>
        </div>
        <div className="relative ml-[11px] flex w-[51px] items-center justify-center border-b-[3px] border-[#6fb0e0]">
          <svg width="28" height="34" viewBox="0 0 28 34">
            <ellipse cx="14" cy="17" rx="14" ry="17" fill="#2fa3d9" />
            <path d="M4 17l19-9-4 18-5-5-3 3-1-6z" fill="#fff" />
          </svg>
          <span className="absolute left-[27px] top-[24px] rounded-[3px] bg-[#777777] px-[1px] text-[10px] leading-[15px] text-white">..26</span>
        </div>
        <div className="ml-[11px] flex w-[51px] items-center justify-center border-b-[3px] border-[#6fb0e0]">
          <svg width="30" height="38" viewBox="0 0 30 38">
            <path d="M15 0l7 9-7 9-7-9z" fill="#e35d5b" />
            <path d="M7 10l7 9-7 9-7-9z" fill="#4d8fe0" />
            <path d="M23 10l7 9-7 9-7-9z" fill="#4caf50" />
            <path d="M15 20l7 9-7 9-7-9z" fill="#f2c53d" />
            <path d="M15 12v14M9 13l6 6 6-6" stroke="#1a1a1a" strokeWidth="1.500" fill="none" />
          </svg>
        </div>
        <div className="ml-[6px] flex w-[61px] items-center justify-center border-b-[3px] border-[#6fb0e0] bg-[#3c4249]">
          <svg width="28" height="36" viewBox="0 0 28 36">
            <path d="M10 4h18v28H10z" fill="#fff" />
            <path d="M14 9h11M14 13h11M14 17h11M14 21h11M14 25h11" stroke="#2b579a" strokeWidth="2" />
            <path d="M0 4l15-4v36L0 32z" fill="#2b579a" />
            <path d="M2.500 12h2l1.500 8 1.500-8h1.500l1.500 8 1.500-8h1.500l-2.200 12h-1.600L8 16l-1.600 8H4.800z" fill="#fff" />
          </svg>
        </div>

        <div className="ml-auto flex items-center text-[13.5px]">
          <Ico w={22} h={20}>
            <circle cx="14" cy="5" r="3.500" stroke="#fff" strokeWidth="1.300" />
            <circle cx="7" cy="9" r="3.500" stroke="#fff" strokeWidth="1.300" />
            <path d="M1 19c0-4 3-6 6-6s5 2 5 6M13 10c4 0 7 2 7 5" stroke="#fff" strokeWidth="1.300" />
          </Ico>
          <Ico w={16} h={9} className="ml-[25px]">
            <path d="M.5 8.500L8 1l7.500 7.500" stroke="#fff" />
          </Ico>
          <svg width="20" height="20" viewBox="0 0 20 20" className="ml-[13px]">
            <circle cx="10" cy="10" r="10" fill="#7cb342" />
            <circle cx="10" cy="9" r="7.500" fill="#f6d32d" />
            <path d="M8.500 5h3v3h3v3h-3v3h-3v-3h-3V8h3z" fill="#2e9e3e" />
          </svg>
          <Ico w={20} h={14} className="ml-[9px]">
            <path d="M3.500 1.500h15v11h-15" stroke="#fff" />
            <path d="M1 4v4M3.500 4v4M.5 8h3.500M2.500 8v6" stroke="#fff" />
            <path d="M19 5v4" stroke="#fff" />
          </Ico>
          <Ico w={19} h={14} className="ml-[10px]">
            <path d="M.5 4.500h3L8 .5v13l-4.500-4h-3z" stroke="#fff" />
            <path d="M11 4l6 6M17 4l-6 6" stroke="#fff" />
          </Ico>
          <Ico w={16} h={16} className="ml-[13px]">
            <path d="M.5 15a14 14 0 0 1 14-14M4 15A10.500 10.500 0 0 1 14.500 4.500M7.500 15a7 7 0 0 1 7-7M11 15a3.500 3.500 0 0 1 2-3" stroke="#c7c7c7" />
            <circle cx="14" cy="14" r="1.500" fill="#fff" />
          </Ico>
          <span className="ml-[17px] text-[14px]">РУС</span>
          <div className="ml-[19px] flex flex-col items-center leading-[23px]">
            <span>14:17</span>
            <span>11.04.2020</span>
          </div>
          <Ico w={20} h={18} className="ml-[23px] mr-[31px]">
            <path d="M.5.500h19v14h-7l-2.500 3-2.500-3h-7z" stroke="#fff" />
          </Ico>
        </div>
      </div>
    </div>
  );
}
